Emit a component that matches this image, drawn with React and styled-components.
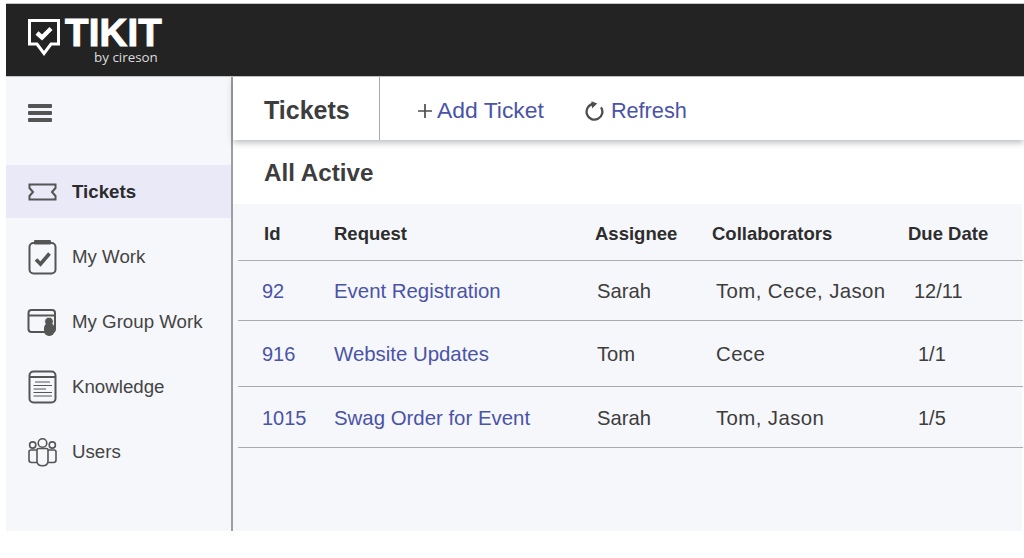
import React from "react";
import styled, { createGlobalStyle } from "styled-components";

const GlobalStyle = createGlobalStyle`
  html, body { margin: 0; padding: 0; background: #fff; }
  body { font-family: "Liberation Sans", Arial, sans-serif; overflow: hidden; }
  #root { padding: 3px 0 0 6px; box-sizing: border-box; height: 558px; }
`;

const Header = styled.header`
  box-sizing: border-box;
  height: 74px;
  background: #232323;
  border-top: 1px solid #c4c4c4;
  border-bottom: 1px solid #c4c4c4;
  padding: 15px 0 0 22px;
`;

const Brand = styled.div`
  display: flex;
  align-items: flex-start;
  gap: 5px;
  color: #fff;
`;

const BrandText = styled.div`
  display: flex;
  flex-direction: column;
`;

const BrandName = styled.span`
  font-size: 38.4px;
  line-height: 27px;
  font-weight: 700;
  letter-spacing: 0.2px;
  -webkit-text-stroke: 1.1px #fff;
`;

const BrandSub = styled.span`
  font-family: "Open Sans", sans-serif;
  font-size: 13.4px;
  line-height: 14px;
  margin-top: 4px;
  padding-left: 29px;
  color: #dcdcdc;
`;

const Body = styled.div`
  display: flex;
  height: 454px;
`;

const Sidebar = styled.aside`
  box-sizing: border-box;
  width: 227px;
  flex: none;
  background: #f6f7fa;
  border-right: 2px solid #9d9ea3;
`;

const MenuButton = styled.div`
  display: flex;
  flex-direction: column;
  gap: 3.6px;
  width: 24px;
  padding: 27px 0 43px 22px;
  span { height: 3.6px; background: #555; border-radius: 1px; }
`;

const Nav = styled.nav`
  display: flex;
  flex-direction: column;
  gap: 12px;
`;

const NavItem = styled.div`
  box-sizing: border-box;
  display: flex;
  align-items: center;
  height: 53px;
  padding: 2px 0 0 20px;
  font-size: 18.7px;
  font-weight: ${(p) => (p.$active ? 700 : 400)};
  color: ${(p) => (p.$active ? "#2b2b2b" : "#444")};
  background: ${(p) => (p.$active ? "#e9e9f7" : "transparent")};
`;

const NavIcon = styled.span`
  display: flex;
  align-items: center;
  justify-content: center;
  width: 32px;
  margin-right: 14px;
  flex: none;
`;

const Main = styled.main`
  flex: 1;
  display: flex;
  flex-direction: column;
  min-width: 0;
`;

const Toolbar = styled.div`
  display: flex;
  align-items: stretch;
  height: 63px;
  background: #fff;
  box-shadow: 0 3px 6px rgba(60, 64, 72, 0.32);
  position: relative;
`;

const ToolbarTitle = styled.h1`
  display: flex;
  align-items: center;
  box-sizing: border-box;
  width: 147px;
  margin: 0;
  padding: 4px 0 0 31px;
  font-size: 25px;
  font-weight: 700;
  color: #3d3d3d;
  border-right: 1px solid #aaa;
`;

const ToolbarAction = styled.a`
  display: flex;
  align-items: center;
  gap: ${(p) => p.$gap}px;
  margin-left: ${(p) => p.$left}px;
  padding-top: 4px;
  font-size: ${(p) => p.$size}px;
  color: #4a53a8;
`;

const SubHead = styled.h2`
  box-sizing: border-box;
  display: flex;
  align-items: center;
  height: 64px;
  margin: 0;
  padding: 2px 0 0 31px;
  font-size: 24.2px;
  font-weight: 700;
  color: #3d3d3d;
  background: #fff;
`;

const Table = styled.div`
  flex: 1;
  margin-right: 2px;
  padding-left: 5px;
  background: #f6f7fa;
`;

const Row = styled.div`
  box-sizing: border-box;
  display: grid;
  grid-template-columns: 96px 261px 117px 196px 1fr;
  align-items: center;
  height: ${(p) => p.$height}px;
  padding-top: ${(p) => (p.$head ? 4 : 2)}px;
  border-bottom: 1px solid #a9abb0;
  margin-right: -1px;
`;

const HeadCell = styled.div`
  padding-left: ${(p) => p.$inset || 0}px;
  font-size: 18.5px;
  font-weight: 700;
  color: #2d2d2d;
`;

const Cell = styled.div`
  padding-left: ${(p) => p.$inset || 0}px;
  font-size: ${(p) => p.$size || 20}px;
  letter-spacing: ${(p) => p.$spacing || 0}px;
  color: ${(p) => (p.$link ? "#4a53a8" : "#3d3d3d")};
`;

const LogoMark = () => (
  <svg width="32" height="37" viewBox="0 0 32 37" fill="none">
    <path d="M1.5 1.5H30.5V25H23L16 34.5L9 25H1.5Z" stroke="#fff" strokeWidth="3" />
    <path d="M9 14L14 18.5L23 9.5" stroke="#fff" strokeWidth="4.4" />
  </svg>
);

const TicketIcon = () => (
  <svg width="29" height="18" viewBox="0 0 29 18" fill="none" stroke="#555" strokeWidth="2">
    <path d="M1.5 1.5H27.5V5L24 9L27.5 13V16.5H1.5V13L5 9L1.5 5Z" />
  </svg>
);

const ClipboardIcon = () => (
  <svg width="29" height="36" viewBox="0 0 29 36" fill="none" stroke="#555">
    <rect x="1.5" y="4" width="26" height="30.5" rx="4" strokeWidth="2" />
    <rect x="6" y="1" width="17" height="4.5" rx="1" fill="#555" stroke="none" />
    <path d="M8 20.5L12.5 25L21.5 14.5" strokeWidth="3.6" />
  </svg>
);

const GroupIcon = () => (
  <svg width="30" height="29" viewBox="0 0 30 29" fill="none" stroke="#555">
    <rect x="1.5" y="2" width="26.5" height="22" rx="3" strokeWidth="2" />
    <path d="M2 7.5H28" strokeWidth="2" />
    <circle cx="22" cy="13.5" r="4.4" fill="#555" stroke="#f6f7fa" strokeWidth="1" />
    <rect x="17" y="15" width="10.5" height="13" rx="5" fill="#555" stroke="none" />
  </svg>
);

const KnowledgeIcon = () => (
  <svg width="29" height="34" viewBox="0 0 29 34" fill="none" stroke="#555">
    <rect x="1.5" y="1.5" width="26" height="31" rx="4" strokeWidth="2" />
    <path d="M2 7H27" strokeWidth="2" />
    <path d="M7 12H22M5.5 15.5H24M5.5 19H18M5.5 22.5H24M5.5 26H24" strokeWidth="1" />
  </svg>
);

const UsersIcon = () => (
  <svg width="29" height="30" viewBox="0 0 29 30" fill="none" stroke="#555" strokeWidth="1.6">
    <circle cx="14.5" cy="6" r="4.3" />
    <circle cx="4.7" cy="8" r="3.1" />
    <circle cx="24.3" cy="8" r="3.1" />
    <path d="M9 13Q9 11.5 10.5 11.5H18.5Q20 11.5 20 13V24Q20 28.8 14.5 28.8Q9 28.8 9 24Z" />
    <path d="M9 25.5H3.5Q1 25.5 1 23V15Q1 13 3 13H9" />
    <path d="M20 25.5H25.5Q28 25.5 28 23V15Q28 13 26 13H20" />
  </svg>
);

const RefreshIcon = () => (
  <svg width="19" height="20" viewBox="0 0 19 20" fill="none">
    <path d="M16 6.3A7.9 7.9 0 1 1 8 3" stroke="#4d4d4d" strokeWidth="2.3" />
    <path d="M6.4 0.3L12.2 2.6L7 7.4Z" fill="#4d4d4d" />
  </svg>
);

const PlusIcon = () => (
  <svg width="14" height="14" viewBox="0 0 14 14" stroke="#4d4d4d" strokeWidth="1.7">
    <path d="M7 0V14M0 7H14" />
  </svg>
);

const navItems = [
  { label: "Tickets", Icon: TicketIcon, active: true },
  { label: "My Work", Icon: ClipboardIcon },
  { label: "My Group Work", Icon: GroupIcon },
  { label: "Knowledge", Icon: KnowledgeIcon },
  { label: "Users", Icon: UsersIcon },
];

const tickets = [
  { id: "92", request: "Event Registration", assignee: "Sarah", collab: "Tom, Cece, Jason", due: "12/11", dueInset: 6, height: 60 },
  { id: "916", request: "Website Updates", assignee: "Tom", collab: "Cece", due: "1/1", dueInset: 10, height: 66 },
  { id: "1015", request: "Swag Order for Event", assignee: "Sarah", collab: "Tom, Jason", due: "1/5", dueInset: 10, height: 61 },
];

export default function App() {
  return (
    <>
      <GlobalStyle />
      <Header>
        <Brand>
          <LogoMark />
          <BrandText>
            <BrandName>TIKIT</BrandName>
            <BrandSub>by cireson</BrandSub>
          </BrandText>
        </Brand>
      </Header>
      <Body>
        <Sidebar>
          <MenuButton>
            <span />
            <span />
            <span />
          </MenuButton>
          <Nav>
            {navItems.map(({ label, Icon, active }) => (
              <NavItem key={label} $active={active}>
                <NavIcon>
                  <Icon />
                </NavIcon>
                {label}
              </NavItem>
            ))}
          </Nav>
        </Sidebar>
        <Main>
          <Toolbar>
            <ToolbarTitle>Tickets</ToolbarTitle>
            <ToolbarAction $left={38} $gap={5} $size={22.9}>
              <PlusIcon />
              Add Ticket
            </ToolbarAction>
            <ToolbarAction $left={41} $gap={7} $size={21.7}>
              <RefreshIcon />
              Refresh
            </ToolbarAction>
          </Toolbar>
          <SubHead>All Active</SubHead>
          <Table>
            <Row $head $height={57}>
              <HeadCell $inset={26}>Id</HeadCell>
              <HeadCell>Request</HeadCell>
              <HeadCell>Assignee</HeadCell>
              <HeadCell>Collaborators</HeadCell>
              <HeadCell>Due Date</HeadCell>
            </Row>
            {tickets.map((t) => (
              <Row key={t.id} $height={t.height}>
                <Cell $link $inset={24}>{t.id}</Cell>
                <Cell $link $size={20.4}>{t.request}</Cell>
                <Cell $inset={2} $size={20.2}>{t.assignee}</Cell>
                <Cell $inset={4} $size={20.4} $spacing={0.4}>{t.collab}</Cell>
                <Cell $inset={t.dueInset}>{t.due}</Cell>
              </Row>
            ))}
          </Table>
        </Main>
      </Body>
    </>
  );
}
